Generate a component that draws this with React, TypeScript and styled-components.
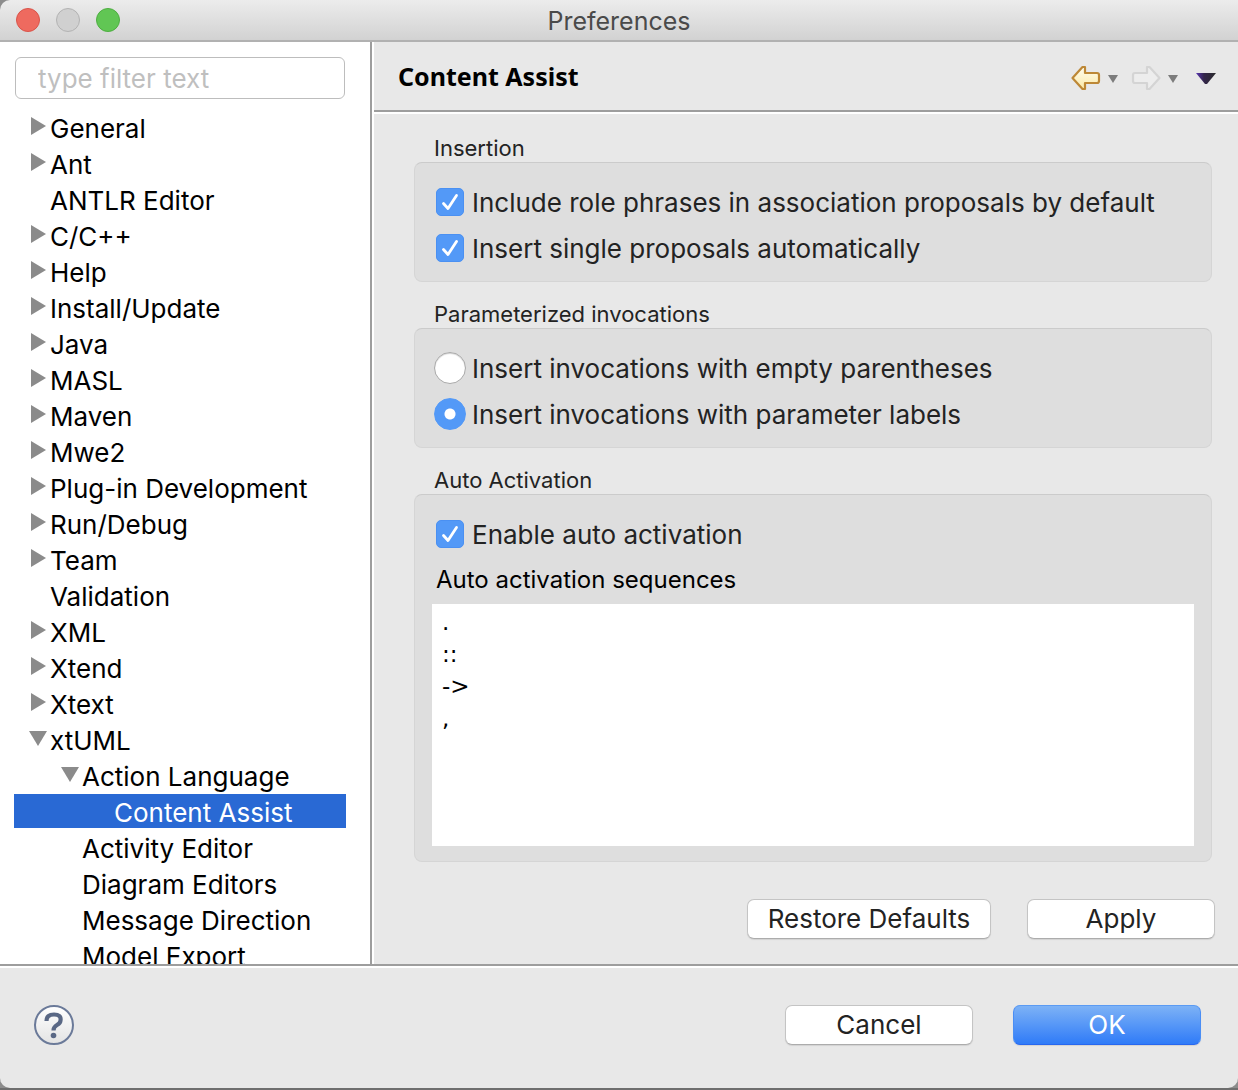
import React, { useState } from "react";
import styled, { createGlobalStyle, css } from "styled-components";

const UI_FONT = `Inter, "Liberation Sans", sans-serif`;
const HEADING_FONT = `"Noto Sans", "Open Sans", sans-serif`;
const EDITOR_FONT = `"DejaVu Sans", sans-serif`;

const GlobalStyle = createGlobalStyle`
  *, *::before, *::after { box-sizing: border-box; }
  body { margin: 0; background: #8c8c8c; }
  button, input, textarea { font: inherit; margin: 0; }
`;

const Window = styled.div`
  display: flex;
  flex-direction: column;
  height: 100vh;
  border-bottom: 2px solid #6e6e6e;
  font-family: ${UI_FONT};
  font-size: 26px;
  color: #232323;
`;

const TitleBar = styled.header`
  display: grid;
  grid-template-columns: 1fr auto 1fr;
  align-items: center;
  height: 42px;
  flex: none;
  padding: 0 16px;
  border-bottom: 2px solid #b1b1b1;
  border-top-left-radius: 10px;
  background: linear-gradient(#ececec, #d2d2d2);
`;

const Lights = styled.div`
  display: flex;
  gap: 16px;
`;

const Light = styled.button<{ $fill: string; $edge: string }>`
  width: 24px;
  height: 24px;
  padding: 0;
  border: 1px solid ${(p) => p.$edge};
  border-radius: 50%;
  background: ${(p) => p.$fill};
`;

const Title = styled.h1`
  margin: 0;
  padding-top: 2px;
  font-size: 25px;
  font-weight: 400;
  line-height: 38px;
  color: #4a4a4a;
`;

const Main = styled.div`
  display: flex;
  flex: 1;
  min-height: 0;
`;

const Sidebar = styled.nav`
  display: flex;
  flex-direction: column;
  flex: none;
  width: 372px;
  padding: 15px 24px 0 14px;
  border-right: 2px solid #9d9d9d;
  background: #fff;
`;

const Filter = styled.input`
  flex: none;
  height: 42px;
  margin: 0 1px 11px;
  padding: 1px 22px 0;
  border: 1px solid #bdbdbd;
  border-radius: 6px;
  background: #fff;
  color: #000;
  outline: none;
  &::placeholder { color: #bfbfbf; opacity: 1; }
`;

const Tree = styled.ul`
  flex: 1;
  min-height: 0;
  margin: 0;
  padding: 0;
  overflow: auto;
  scrollbar-width: none;
  list-style: none;
  color: #000;
`;

const TreeRow = styled.li<{ $level: number; $selected: boolean }>`
  display: flex;
  align-items: center;
  height: 34px;
  margin-bottom: 2px;
  padding-left: ${(p) => 14 + p.$level * 32}px;
  line-height: 34px;
  white-space: nowrap;
  ${(p) => p.$selected && css`background: #2969d4; color: #fff;`}
`;

const Twisty = styled.button`
  display: block;
  flex: none;
  width: 22px;
  height: 34px;
  padding: 0;
  border: 0;
  background: none;
  svg { display: block; }
`;

const TreeLabel = styled.span`
  padding-top: 3px;
`;

const Page = styled.section`
  display: flex;
  flex-direction: column;
  flex: 1;
  min-width: 0;
  border-left: 2px solid #fff;
  background: #e8e8e8;
`;

const PageHeader = styled.div`
  display: flex;
  align-items: center;
  justify-content: space-between;
  flex: none;
  height: 70px;
  padding: 0 22px 0 24px;
  border-bottom: 2px solid #9d9d9d;
`;

const PageTitle = styled.h2`
  margin: 0;
  font-family: ${HEADING_FONT};
  font-size: 25px;
  font-weight: 700;
  color: #000;
`;

const Tools = styled.div`
  display: flex;
  align-items: center;
  padding-top: 4px;
`;

const ToolButton = styled.button<{ $gap: number }>`
  display: block;
  margin-left: ${(p) => p.$gap}px;
  padding: 0;
  border: 0;
  background: none;
  svg { display: block; }
`;

const PageBody = styled.form`
  display: flex;
  flex-direction: column;
  flex: 1;
  gap: 18px;
  padding: 20px 26px 0 40px;
  border-top: 2px solid #fff;
`;

const Group = styled.fieldset`
  min-width: 0;
  margin: 0;
  padding: 0;
  border: 0;
`;

const Legend = styled.legend`
  padding: 0 20px;
  font-size: 22px;
  line-height: 28px;
`;

const GroupBox = styled.div`
  display: flex;
  flex-direction: column;
  padding: 16px 17px 10px;
  border: 1px solid #d5d5d5;
  border-top-color: #cbcbcb;
  border-radius: 8px;
  background: #dedede;
`;

const SequenceBox = styled(GroupBox)`
  padding-bottom: 15px;
`;

const Option = styled.label`
  display: grid;
  grid-template-columns: 32px 1fr;
  align-items: center;
  justify-items: center;
  gap: 6px;
  height: 46px;
  padding-left: 2px;
`;

const OptionText = styled.span`
  justify-self: start;
`;

const Control = styled.span`
  display: grid;
  place-items: center;
  & > * { grid-area: 1 / 1; }
  svg { pointer-events: none; }
`;

const CheckInput = styled.input`
  appearance: none;
  width: 28px;
  height: 28px;
  border-radius: 5px;
  border: 1px solid #b5b5b5;
  background: #fff;
  &:checked { border-color: #4a90f2; background: #5399f7; }
`;

const RadioInput = styled.input`
  appearance: none;
  width: 32px;
  height: 32px;
  border: 1px solid #a9a9a9;
  border-radius: 50%;
  background: #fff;
  box-shadow: inset 0 1px 1px #d4d4d4;
  &:checked {
    border-color: #5399f7;
    background: radial-gradient(circle, #fff 5px, #5399f7 6px);
    box-shadow: none;
  }
`;

const SequenceLabel = styled.label`
  padding: 0 4px 1px;
  font-size: 24px;
  line-height: 46px;
  color: #000;
`;

const Sequences = styled.textarea`
  display: block;
  width: 100%;
  height: 242px;
  padding: 2px 10px;
  border: 0;
  outline: none;
  resize: none;
  background: #fff;
  font-family: ${EDITOR_FONT};
  font-size: 23px;
  line-height: 32px;
  color: #000;
`;

const PageActions = styled.div`
  display: flex;
  justify-content: flex-end;
  flex: none;
  gap: 36px;
  padding: 0 23px 25px;
`;

const PushButton = styled.button<{ $wide?: boolean; $primary?: boolean }>`
  width: ${(p) => (p.$wide ? 244 : 188)}px;
  height: 40px;
  padding: 0;
  border: 1px solid #c4c4c4;
  border-bottom-color: #acacac;
  border-radius: 7px;
  background: #fff;
  box-shadow: 0 1px 1px #d2d2d2;
  color: #232323;
  line-height: 38px;
  ${(p) =>
    p.$primary &&
    css`
      border-color: #5b9bf3 #4a8ef5 #2767f0;
      background: linear-gradient(#7db2f6, #2f7bf8);
      color: #fff;
    `}
`;

const Footer = styled.footer`
  display: flex;
  align-items: center;
  flex: none;
  gap: 40px;
  height: 124px;
  padding: 0 37px 4px 34px;
  border-top: 2px solid #9d9d9d;
  border-radius: 0 0 10px 10px;
  background: #e8e8e8;
  box-shadow: inset 0 2px #fff;
`;

const HelpButton = styled.button`
  display: grid;
  place-items: center;
  width: 40px;
  height: 40px;
  margin-right: auto;
  padding: 0;
  border: 2px solid #6b7a99;
  border-radius: 50%;
  background: linear-gradient(#fff, #e4e4e4);
`;

type Node = { name: string; level: number; state?: "open" | "closed" };

const NODES: Node[] = [
  { name: "General", level: 0, state: "closed" },
  { name: "Ant", level: 0, state: "closed" },
  { name: "ANTLR Editor", level: 0 },
  { name: "C/C++", level: 0, state: "closed" },
  { name: "Help", level: 0, state: "closed" },
  { name: "Install/Update", level: 0, state: "closed" },
  { name: "Java", level: 0, state: "closed" },
  { name: "MASL", level: 0, state: "closed" },
  { name: "Maven", level: 0, state: "closed" },
  { name: "Mwe2", level: 0, state: "closed" },
  { name: "Plug-in Development", level: 0, state: "closed" },
  { name: "Run/Debug", level: 0, state: "closed" },
  { name: "Team", level: 0, state: "closed" },
  { name: "Validation", level: 0 },
  { name: "XML", level: 0, state: "closed" },
  { name: "Xtend", level: 0, state: "closed" },
  { name: "Xtext", level: 0, state: "closed" },
  { name: "xtUML", level: 0, state: "open" },
  { name: "Action Language", level: 1, state: "open" },
  { name: "Content Assist", level: 2 },
  { name: "Activity Editor", level: 1 },
  { name: "Diagram Editors", level: 1 },
  { name: "Message Direction", level: 1 },
  { name: "Model Export", level: 1 },
];

function Triangle({ open }: { open: boolean }) {
  return (
    <svg width="21" height="34" viewBox="0 0 21 34" fill="#8b8b8b">
      {open ? <path d="M1 9h18l-9 15z" /> : <path d="M3 7v18l15-9z" />}
    </svg>
  );
}

function Check({ label }: { label: string }) {
  return (
    <Option>
      <Control>
        <CheckInput type="checkbox" defaultChecked />
        <svg width="28" height="28" viewBox="0 0 28 28" fill="none">
          <path d="M7.500 15.500l4.500 5L20.500 7.500" stroke="#fff" strokeWidth="2.800" strokeLinecap="round" strokeLinejoin="round" />
        </svg>
      </Control>
      <OptionText>{label}</OptionText>
    </Option>
  );
}

function Radio({ label, checked }: { label: string; checked?: boolean }) {
  return (
    <Option>
      <RadioInput type="radio" name="invocations" defaultChecked={checked} />
      <OptionText>{label}</OptionText>
    </Option>
  );
}

function MenuArrow() {
  return (
    <svg width="10" height="24" viewBox="0 0 10 24">
      <path d="M0 9h10l-5 8z" fill="#7c7c7c" />
    </svg>
  );
}

export default function App() {
  const [selected, setSelected] = useState("Content Assist");
  return (
    <>
      <GlobalStyle />
      <Window>
        <TitleBar>
          <Lights>
            <Light aria-label="Close" $fill="#ee6a5f" $edge="#d9544a" />
            <Light aria-label="Minimize" $fill="#d0d0d0" $edge="#b3b3b3" />
            <Light aria-label="Zoom" $fill="#61c654" $edge="#4eae41" />
          </Lights>
          <Title>Preferences</Title>
        </TitleBar>
        <Main>
          <Sidebar>
            <Filter type="text" placeholder="type filter text" aria-label="Filter" />
            <Tree>
              {NODES.map((n) => (
                <TreeRow
                  key={n.name}
                  $level={n.level}
                  $selected={selected === n.name}
                  onClick={() => setSelected(n.name)}
                >
                  <Twisty as={n.state ? "button" : "span"} aria-label={n.state ? `Toggle ${n.name}` : undefined}>
                    {n.state && <Triangle open={n.state === "open"} />}
                  </Twisty>
                  <TreeLabel>{n.name}</TreeLabel>
                </TreeRow>
              ))}
            </Tree>
          </Sidebar>
          <Page>
            <PageHeader>
              <PageTitle>Content Assist</PageTitle>
              <Tools>
                <ToolButton aria-label="Back" $gap={0}>
                  <svg width="32" height="28" viewBox="0 0 32 28">
                    <defs>
                      <linearGradient id="back" x1="0" y1="0" x2="0" y2="1">
                        <stop offset="0" stopColor="#fffdf0" />
                        <stop offset="1" stopColor="#fbe9a6" />
                      </linearGradient>
                    </defs>
                    <path d="M2.500 14L12.500 3h2.500v6h12q2 0 2 2v6q0 2-2 2H15v6h-2.500z" fill="url(#back)" stroke="#bd8836" strokeWidth="2.200" strokeLinejoin="round" />
                  </svg>
                </ToolButton>
                <ToolButton aria-label="Back history" $gap={6}><MenuArrow /></ToolButton>
                <ToolButton aria-label="Forward" $gap={12}>
                  <svg width="32" height="28" viewBox="0 0 32 28">
                    <path d="M29.500 14L19.500 3h-2.500v6H5q-2 0-2 2v6q0 2 2 2h12v6h2.500z" fill="#ededed" stroke="#d4d4d4" strokeWidth="2.200" strokeLinejoin="round" />
                  </svg>
                </ToolButton>
                <ToolButton aria-label="Forward history" $gap={6}><MenuArrow /></ToolButton>
                <ToolButton aria-label="View menu" $gap={18}>
                  <svg width="20" height="24" viewBox="0 0 20 24">
                    <defs>
                      <linearGradient id="menu" x1="0" y1="0" x2="1" y2="0">
                        <stop offset="0" stopColor="#5a35b5" />
                        <stop offset="0.400" stopColor="#33264a" />
                        <stop offset="1" stopColor="#2a2a2a" />
                      </linearGradient>
                    </defs>
                    <path d="M0 7h20l-9 11h-2z" fill="url(#menu)" />
                  </svg>
                </ToolButton>
              </Tools>
            </PageHeader>
            <PageBody onSubmit={(e) => e.preventDefault()}>
              <Group>
                <Legend>Insertion</Legend>
                <GroupBox>
                  <Check label="Include role phrases in association proposals by default" />
                  <Check label="Insert single proposals automatically" />
                </GroupBox>
              </Group>
              <Group>
                <Legend>Parameterized invocations</Legend>
                <GroupBox>
                  <Radio label="Insert invocations with empty parentheses" />
                  <Radio label="Insert invocations with parameter labels" checked />
                </GroupBox>
              </Group>
              <Group>
                <Legend>Auto Activation</Legend>
                <SequenceBox>
                  <Check label="Enable auto activation" />
                  <SequenceLabel htmlFor="sequences">Auto activation sequences</SequenceLabel>
                  <Sequences id="sequences" spellCheck={false} defaultValue={".\n::\n->\n,"} />
                </SequenceBox>
              </Group>
            </PageBody>
            <PageActions>
              <PushButton type="button" $wide>Restore Defaults</PushButton>
              <PushButton type="button">Apply</PushButton>
            </PageActions>
          </Page>
        </Main>
        <Footer>
          <HelpButton aria-label="Help">
            <svg width="24" height="30" viewBox="0 0 24 30" fill="none">
              <path d="M4.500 11Q4.500 4.500 12 4.500t6.500 6q0 2.500-3.500 4.500t-3.500 5.500" stroke="#5a6885" strokeWidth="4.200" />
              <circle cx="11.500" cy="25.500" r="2.800" fill="#5a6885" />
            </svg>
          </HelpButton>
          <PushButton type="button">Cancel</PushButton>
          <PushButton type="button" $primary>OK</PushButton>
        </Footer>
      </Window>
    </>
  );
}
